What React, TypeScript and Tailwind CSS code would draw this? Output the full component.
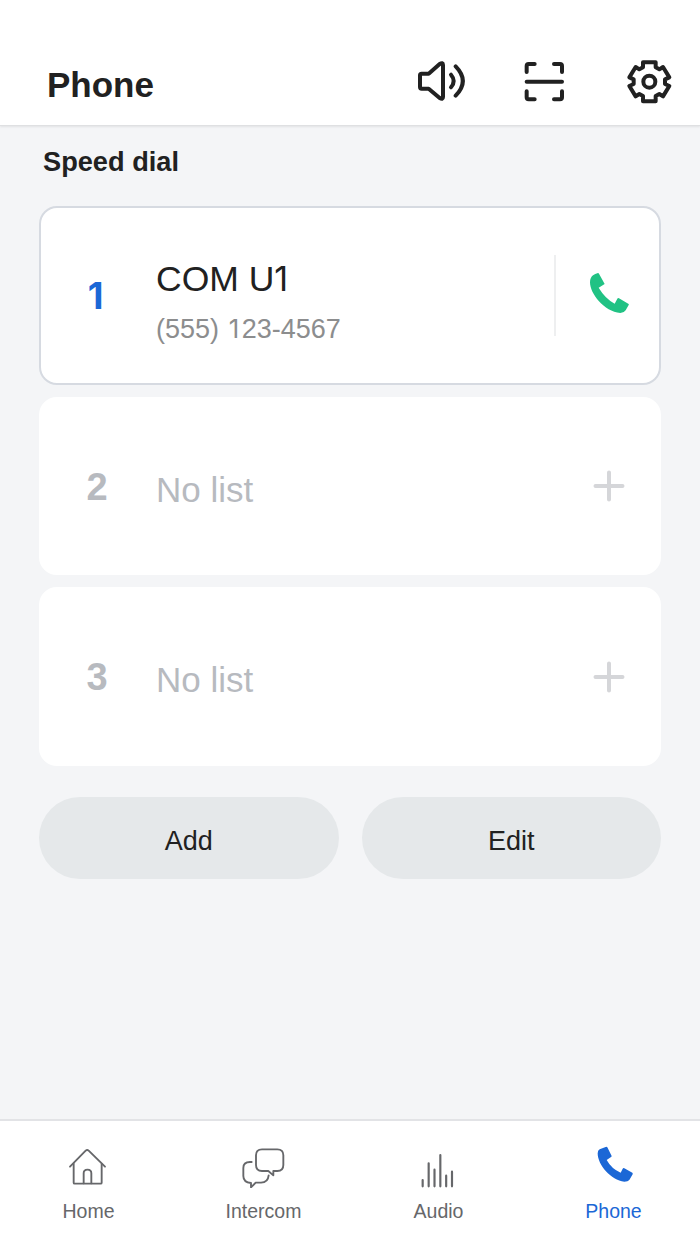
import type { ReactNode } from 'react';

interface SpeedDial {
  slot: number;
  name?: ReactNode;
  phone?: ReactNode;
}

// Plain numeral one, without the foot serif
function One({ className = '' }: { className?: string }) {
  return (
    <span
      className={`inline-block w-[0.585em] text-center font-['Inter',sans-serif] text-[0.96em] leading-none ${className}`}
    >
      1
    </span>
  );
}

const dials: SpeedDial[] = [
  {
    slot: 1,
    name: <>COM U<One className="-ml-[3px]" /></>,
    phone: <>(555) <One />23-4567</>,
  },
  { slot: 2 },
  { slot: 3 },
];

const iconClass = 'w-[52px] h-11 shrink-0';
const navIconClass = 'w-[51px] h-11 shrink-0';

function SpeakerIcon() {
  return (
    <svg className={iconClass} viewBox="45 60 156 132" fill="none" stroke="currentColor" strokeWidth="12" strokeLinecap="round" strokeLinejoin="round">
      <path d="M65 101H86L119 72Q129 66 129 75V171Q129 180 119 174L86 146H65Q60 146 60 141V106Q60 101 65 101Z" />
      <path d="M153 104Q169 123 153 142" />
      <path d="M167 79Q210 123 167 167" />
    </svg>
  );
}

function ScanIcon() {
  return (
    <svg className={iconClass} viewBox="357 60 156 132" fill="none" stroke="currentColor" strokeWidth="12" strokeLinecap="round" strokeLinejoin="round">
      <path d="M404 72H386Q380 72 380 78V96" />
      <path d="M462 72H480Q486 72 486 78V96" />
      <path d="M404 178H386Q380 178 380 172V154" />
      <path d="M462 178H480Q486 178 486 172V154" />
      <path d="M380 125.500H486" />
    </svg>
  );
}

function GearIcon() {
  return (
    <svg className={iconClass} viewBox="219 60 156 132" fill="none" stroke="currentColor" strokeWidth="12" strokeLinejoin="round">
      <path d="M279 82V67H317V82L328 88L339 81L358 112L345 118V132L358 138L339 169L328 162L317 168V184H279V168L268 162L257 169L238 138L251 132V118L238 112L257 81L268 88Z" />
      <circle cx="298" cy="125" r="18" />
    </svg>
  );
}

function HomeIcon() {
  return (
    <svg className={navIconClass} viewBox="66 102 153 132" fill="none" stroke="currentColor" strokeWidth="5.6" strokeLinecap="round" strokeLinejoin="round">
      <path d="M90 170L137 122Q141.500 118 146 122L195 170" />
      <path d="M101 161V218Q101 221 104 221H182Q185 221 185 218V161" />
      <path d="M131 220V190Q131 179 142.500 179Q154 179 154 190V220" />
    </svg>
  );
}

function IntercomIcon() {
  return (
    <svg className={navIconClass} viewBox="591 102 153 132" fill="none" stroke="currentColor" strokeWidth="5.6" strokeLinecap="round" strokeLinejoin="round">
      <path d="M666 118H712Q730 118 730 136V165Q730 183 712 183H700V196L685 183H666Q648 183 648 165V136Q648 118 666 118Z" />
      <path d="M635 156H630Q610 156 610 174V198Q610 217 633 219V232L647 218H663Q684 217 686 196" />
    </svg>
  );
}

function AudioIcon() {
  return (
    <svg className={navIconClass} viewBox="66 102 153 132" fill="none" stroke="currentColor" strokeWidth="6.5" strokeLinecap="round">
      <path d="M98 210V229M116 160V229M133.500 179V229M151 135V229M168.500 197V229M186 185V229" />
    </svg>
  );
}

function PhoneTabIcon() {
  return (
    <svg className={navIconClass} viewBox="591 102 153 132" fill="currentColor">
      <path d="M649 110Q651 110 652 112L665 138Q665 141 662 142L650 150Q665 177 692 188L698 176Q700 173 703 175L727 188Q729 190 728 193L718 210Q714 215 703 215C663 211 623 165 623 130Q623 121 629 118Z" />
    </svg>
  );
}

function CallIcon() {
  return (
    <svg className="w-[39px] h-10" viewBox="0 0 117 120" fill="currentColor">
      <path d="M24 0Q26 0 27 2L44 33L26 44Q45 76 74 92L82 77Q84 74 87 76L116 93Q117 94 116 96L107 112Q102 120 91 120C42 116 0 62 0 28Q0 14 9 7Q15 3 24 0Z" />
    </svg>
  );
}

function PlusIcon() {
  return (
    <svg className="w-8 h-8" viewBox="0 0 32 32" fill="none" stroke="currentColor" strokeWidth="4" strokeLinecap="round">
      <path d="M2.500 16H29.500M16 2.500V29.500" />
    </svg>
  );
}

function DialCard({ slot, name, phone }: SpeedDial) {
  const filled = Boolean(name);

  return (
    <div
      className={`flex h-[178.5px] rounded-[18px] border-2 bg-white ${
        filled ? 'border-[#d6dae1]' : 'border-white'
      }`}
    >
      <div
        className={`w-[115px] pl-[45.5px] pt-[69px] text-[38px] leading-none font-bold ${
          filled ? 'text-[#1b67d6]' : 'text-[#b7babf]'
        }`}
      >
        {slot === 1 ? <One className="-ml-[1.5px]" /> : slot}
      </div>
      {filled ? (
        <>
          <div className="flex-1 pt-[53px]">
            <p className="text-[35.5px] leading-9 text-[#212121]">{name}</p>
            <p className="mt-[19px] text-[27px] leading-[27px] text-[#8c8d8e]">{phone}</p>
          </div>
          <div className="mt-[47px] h-[81px] w-[105px] border-l-2 border-[#eeeff0] pl-[34px] pt-[18px] text-[#21c284]">
            <CallIcon />
          </div>
        </>
      ) : (
        <>
          <p className="flex-1 pt-[73px] text-[35px] leading-none text-[#b7babf]">No list</p>
          <div className="pr-[34.5px] pt-[71.5px] text-[#d5d6d9]">
            <PlusIcon />
          </div>
        </>
      )}
    </div>
  );
}

const tabs = [
  { label: 'Home', icon: <HomeIcon /> },
  { label: 'Intercom', icon: <IntercomIcon /> },
  { label: 'Audio', icon: <AudioIcon /> },
  { label: 'Phone', icon: <PhoneTabIcon />, active: true },
];

export default function App() {
  return (
    <div className="flex h-[1244px] w-[700px] flex-col overflow-hidden bg-[#f4f5f7] font-['Liberation_Sans',Arial,sans-serif] text-[#212121]">
      {/* Header */}
      <header className="flex h-[126px] shrink-0 items-start border-b border-[#dfe0e2] bg-white pl-[47px] pr-[25px] shadow-[0_1px_2px_rgba(0,0,0,0.08)]">
        <h1 className="mt-[67px] flex-1 text-[35px] leading-none font-bold">Phone</h1>
        <div className="mt-[60px] flex gap-[52px]">
          <SpeakerIcon />
          <ScanIcon />
          <GearIcon />
        </div>
      </header>

      {/* Speed dial list */}
      <main className="flex-1 px-[39px]">
        <h2 className="mt-[22px] pl-1 text-[27.2px] leading-7 font-bold">Speed dial</h2>
        <div className="mt-[30px] flex flex-col gap-3">
          {dials.map((dial) => (
            <DialCard key={dial.slot} {...dial} />
          ))}
        </div>
        <div className="mt-[31px] grid grid-cols-2 gap-[23px]">
          <button className="h-[82px] rounded-full bg-[#e5e8ea] pt-2 text-[27px] leading-none">Add</button>
          <button className="h-[82px] rounded-full bg-[#e5e8ea] pt-2 text-[27px] leading-none">Edit</button>
        </div>
      </main>

      {/* Bottom tabs */}
      <nav className="grid h-[125px] shrink-0 grid-cols-4 border-t-2 border-[#e2e3e6] bg-white">
        {tabs.map((tab) => (
          <button
            key={tab.label}
            className={`flex flex-col items-center pt-[23px] ${tab.active ? 'text-[#1b67d6]' : 'text-[#66676a]'}`}
          >
            {tab.icon}
            <span className="mt-[13px] pl-0.5 text-[19.5px] leading-5">{tab.label}</span>
          </button>
        ))}
      </nav>
    </div>
  );
}
